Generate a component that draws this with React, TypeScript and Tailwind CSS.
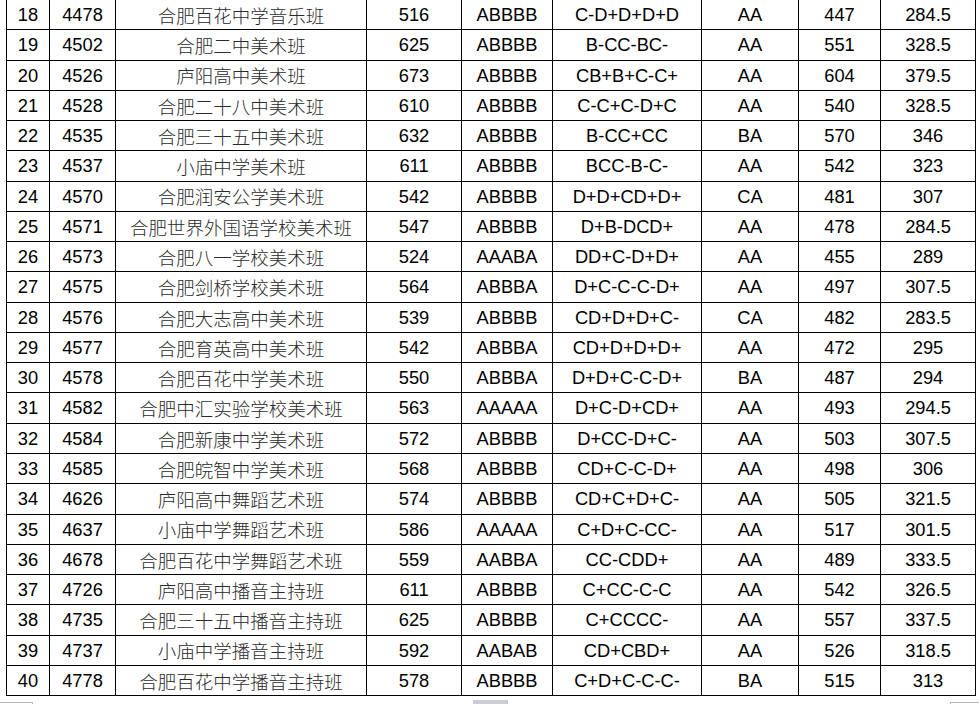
import React from "react";

const rows: string[][] = [
  ["18", "4478", "合肥百花中学音乐班", "516", "ABBBB", "C-D+D+D+D", "AA", "447", "284.5"],
  ["19", "4502", "合肥二中美术班", "625", "ABBBB", "B-CC-BC-", "AA", "551", "328.5"],
  ["20", "4526", "庐阳高中美术班", "673", "ABBBB", "CB+B+C-C+", "AA", "604", "379.5"],
  ["21", "4528", "合肥二十八中美术班", "610", "ABBBB", "C-C+C-D+C", "AA", "540", "328.5"],
  ["22", "4535", "合肥三十五中美术班", "632", "ABBBB", "B-CC+CC", "BA", "570", "346"],
  ["23", "4537", "小庙中学美术班", "611", "ABBBB", "BCC-B-C-", "AA", "542", "323"],
  ["24", "4570", "合肥润安公学美术班", "542", "ABBBB", "D+D+CD+D+", "CA", "481", "307"],
  ["25", "4571", "合肥世界外国语学校美术班", "547", "ABBBB", "D+B-DCD+", "AA", "478", "284.5"],
  ["26", "4573", "合肥八一学校美术班", "524", "AAABA", "DD+C-D+D+", "AA", "455", "289"],
  ["27", "4575", "合肥剑桥学校美术班", "564", "ABBBA", "D+C-C-C-D+", "AA", "497", "307.5"],
  ["28", "4576", "合肥大志高中美术班", "539", "ABBBB", "CD+D+D+C-", "CA", "482", "283.5"],
  ["29", "4577", "合肥育英高中美术班", "542", "ABBBA", "CD+D+D+D+", "AA", "472", "295"],
  ["30", "4578", "合肥百花中学美术班", "550", "ABBBA", "D+D+C-C-D+", "BA", "487", "294"],
  ["31", "4582", "合肥中汇实验学校美术班", "563", "AAAAA", "D+C-D+CD+", "AA", "493", "294.5"],
  ["32", "4584", "合肥新康中学美术班", "572", "ABBBB", "D+CC-D+C-", "AA", "503", "307.5"],
  ["33", "4585", "合肥皖智中学美术班", "568", "ABBBB", "CD+C-C-D+", "AA", "498", "306"],
  ["34", "4626", "庐阳高中舞蹈艺术班", "574", "ABBBB", "CD+C+D+C-", "AA", "505", "321.5"],
  ["35", "4637", "小庙中学舞蹈艺术班", "586", "AAAAA", "C+D+C-CC-", "AA", "517", "301.5"],
  ["36", "4678", "合肥百花中学舞蹈艺术班", "559", "AABBA", "CC-CDD+", "AA", "489", "333.5"],
  ["37", "4726", "庐阳高中播音主持班", "611", "ABBBB", "C+CC-C-C", "AA", "542", "326.5"],
  ["38", "4735", "合肥三十五中播音主持班", "625", "ABBBB", "C+CCCC-", "AA", "557", "337.5"],
  ["39", "4737", "小庙中学播音主持班", "592", "AABAB", "CD+CBD+", "AA", "526", "318.5"],
  ["40", "4778", "合肥百花中学播音主持班", "578", "ABBBB", "C+D+C-C-C-", "BA", "515", "313"],
];

const widths = [
  "w-[43px]",
  "w-[66px]",
  "w-[251px]",
  "w-[95px]",
  "w-[91px]",
  "w-[149px]",
  "w-[97px]",
  "w-[82px]",
  "w-[95px]",
];

export default function App() {
  return (
    <div className="w-[979px] h-[705px] bg-white overflow-hidden relative">
      <div className="ml-[6px] w-[970px] border-l border-black">
        {rows.map((r) => (
          <div key={r[0]} className="flex h-[30.27px] border-b border-black">
            {r.map((c, i) => (
              <div
                key={i}
                className={`${widths[i]} shrink-0 border-r border-black flex items-center justify-center pt-[1px] ${
                  i === 2
                    ? "text-[18.5px] text-[#2a2a2a] font-light [font-family:'Noto_Sans_CJK_SC','Noto_Sans_CJK_JP',sans-serif]"
                    : "text-[18.3px] text-black [font-family:'Liberation_Sans',Arial,sans-serif]"
                } whitespace-nowrap leading-none`}
              >
                {c}
              </div>
            ))}
          </div>
        ))}
      </div>
      <div className="flex items-end h-[8px]">
        <div className="w-[33px] h-[2px] border-t border-r border-[#b8b8b8]" />
        <div className="ml-[440px] w-[35px] h-[4px] bg-[#c9cdd6] mb-[0px]" />
        <div className="ml-[442px] w-[29px] h-[2px] border-t border-l border-[#b8b8b8]" />
      </div>
    </div>
  );
}
